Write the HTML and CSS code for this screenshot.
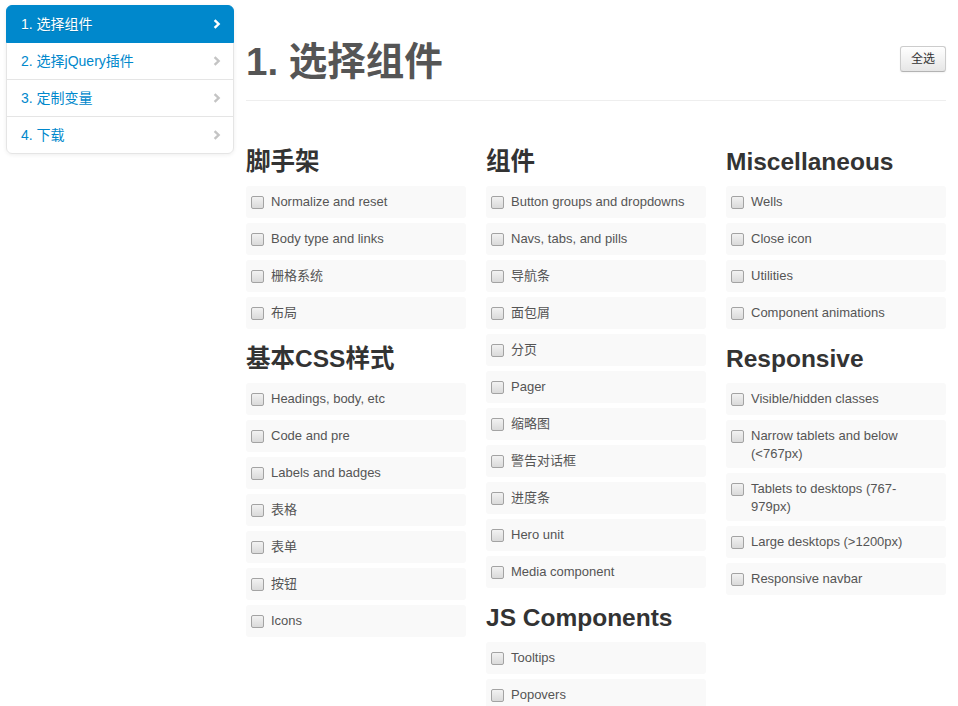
FILE: index.html
```html
<!DOCTYPE html>
<html lang="zh-CN">
<head>
<meta charset="utf-8">
<title>定制 Bootstrap</title>
<link rel="stylesheet" href="styles.css">
</head>
<body>
<div class="layout">
  <div class="side">
    <ul class="sidenav">
      <li><a class="active" href="#components">1. 选择组件<svg class="chev" width="8" height="10" viewBox="0 0 8 10"><path d="M1.6 1.2 L5.6 5 L1.6 8.8" fill="none" stroke="currentColor" stroke-width="2.4"/></svg></a></li>
      <li><a href="#plugins">2. 选择jQuery插件<svg class="chev" width="8" height="10" viewBox="0 0 8 10"><path d="M1.6 1.2 L5.6 5 L1.6 8.8" fill="none" stroke="currentColor" stroke-width="2.4"/></svg></a></li>
      <li><a href="#variables">3. 定制变量<svg class="chev" width="8" height="10" viewBox="0 0 8 10"><path d="M1.6 1.2 L5.6 5 L1.6 8.8" fill="none" stroke="currentColor" stroke-width="2.4"/></svg></a></li>
      <li><a href="#download">4. 下载<svg class="chev" width="8" height="10" viewBox="0 0 8 10"><path d="M1.6 1.2 L5.6 5 L1.6 8.8" fill="none" stroke="currentColor" stroke-width="2.4"/></svg></a></li>
    </ul>
  </div>
  <div class="main">
    <div class="page-header">
      <h1>1. 选择组件</h1>
      <a class="btn" href="#">全选</a>
    </div>
    <div class="builder">
      <div class="col">
        <h3>脚手架</h3>
        <label class="check"><input type="checkbox">Normalize and reset</label>
        <label class="check"><input type="checkbox">Body type and links</label>
        <label class="check"><input type="checkbox">栅格系统</label>
        <label class="check"><input type="checkbox">布局</label>
        <h3>基本CSS样式</h3>
        <label class="check"><input type="checkbox">Headings, body, etc</label>
        <label class="check"><input type="checkbox">Code and pre</label>
        <label class="check"><input type="checkbox">Labels and badges</label>
        <label class="check"><input type="checkbox">表格</label>
        <label class="check"><input type="checkbox">表单</label>
        <label class="check"><input type="checkbox">按钮</label>
        <label class="check"><input type="checkbox">Icons</label>
      </div>
      <div class="col">
        <h3>组件</h3>
        <label class="check"><input type="checkbox">Button groups and dropdowns</label>
        <label class="check"><input type="checkbox">Navs, tabs, and pills</label>
        <label class="check"><input type="checkbox">导航条</label>
        <label class="check"><input type="checkbox">面包屑</label>
        <label class="check"><input type="checkbox">分页</label>
        <label class="check"><input type="checkbox">Pager</label>
        <label class="check"><input type="checkbox">缩略图</label>
        <label class="check"><input type="checkbox">警告对话框</label>
        <label class="check"><input type="checkbox">进度条</label>
        <label class="check"><input type="checkbox">Hero unit</label>
        <label class="check"><input type="checkbox">Media component</label>
        <h3>JS Components</h3>
        <label class="check"><input type="checkbox">Tooltips</label>
        <label class="check"><input type="checkbox">Popovers</label>
        <label class="check"><input type="checkbox">Modals</label>
        <label class="check"><input type="checkbox">Dropdowns</label>
      </div>
      <div class="col">
        <h3>Miscellaneous</h3>
        <label class="check"><input type="checkbox">Wells</label>
        <label class="check"><input type="checkbox">Close icon</label>
        <label class="check"><input type="checkbox">Utilities</label>
        <label class="check"><input type="checkbox">Component animations</label>
        <h3>Responsive</h3>
        <label class="check"><input type="checkbox">Visible/hidden classes</label>
        <label class="check"><input type="checkbox">Narrow tablets and below (&lt;767px)</label>
        <label class="check"><input type="checkbox">Tablets to desktops (767-979px)</label>
        <label class="check"><input type="checkbox">Large desktops (&gt;1200px)</label>
        <label class="check"><input type="checkbox">Responsive navbar</label>
      </div>
    </div>
  </div>
</div>
</body>
</html>
```

FILE: styles.css
```css
html {
  overflow: hidden;
}

body {
  margin: 0;
  background: #fff;
  font-family: "Liberation Sans", Arial, "Noto Sans CJK SC", sans-serif;
  font-size: 14px;
  line-height: 20px;
  color: #333;
}

.layout {
  display: flex;
  gap: 20px;
  padding-left: 6px;
}

.side {
  width: 220px;
  flex: none;
  padding-top: 5px;
}

.sidenav {
  width: 228px;
  margin: 0;
  padding: 0;
  list-style: none;
  background: #fff;
  border-radius: 6px;
  box-shadow: 0 1px 4px rgba(0, 0, 0, 0.065);
}

.sidenav a {
  display: flex;
  align-items: center;
  justify-content: space-between;
  margin: 0 0 -1px;
  padding: 8px 12px 8px 14px;
  border: 1px solid #e5e5e5;
  color: #0088cc;
  text-decoration: none;
}

.sidenav li:first-child a {
  border-radius: 6px 6px 0 0;
}

.sidenav li:last-child a {
  border-radius: 0 0 6px 6px;
}

.sidenav a.active {
  position: relative;
  background: #0088cc;
  border-color: #0088cc;
  color: #fff;
  text-shadow: 0 1px 0 rgba(0, 0, 0, 0.15);
}

.chev {
  flex: none;
  color: #c4c4c4;
}

.active .chev {
  color: #fff;
}

.main {
  width: 700px;
  flex: none;
  padding-top: 31px;
}

.page-header {
  display: flex;
  align-items: flex-start;
  justify-content: space-between;
  padding-bottom: 9px;
  margin-bottom: 30px;
  border-bottom: 1px solid #eee;
}

.page-header h1 {
  margin: 10px 0;
  padding-top: 1px;
  height: 39px;
  font-size: 38.5px;
  line-height: 40px;
  font-weight: bold;
  color: #555;
}

.btn {
  margin-top: 15px;
  padding: 2px 10px;
  font-size: 12px;
  line-height: 20px;
  color: #333;
  text-decoration: none;
  background: linear-gradient(#ffffff, #e6e6e6);
  border: 1px solid #cccccc;
  border-bottom-color: #b3b3b3;
  border-radius: 3px;
  box-shadow: inset 0 1px 0 rgba(255, 255, 255, 0.2), 0 1px 2px rgba(0, 0, 0, 0.05);
}

.builder {
  display: grid;
  grid-template-columns: repeat(3, 220px);
  column-gap: 20px;
}

.col h3 {
  margin: 9px 0 5px;
  padding-top: 1px;
  height: 39px;
  font-size: 24.5px;
  line-height: 40px;
  font-weight: bold;
  color: #333;
}

.col h3:first-child {
  margin-top: 10px;
}

.check {
  display: block;
  min-height: 20px;
  margin: 0 0 5px;
  padding: 7px 12px 5px 25px;
  font-size: 13px;
  line-height: 18px;
  color: #555;
  background: #f9f9f9;
  border-radius: 3px;
}

.check input {
  -webkit-appearance: none;
  appearance: none;
  float: left;
  width: 13px;
  height: 13px;
  margin: 3px 0 0 -20px;
  border: 1px solid #a3a3a3;
  border-radius: 2px;
  background: linear-gradient(#f2f2f2, #dadada);
  box-sizing: border-box;
}
```
